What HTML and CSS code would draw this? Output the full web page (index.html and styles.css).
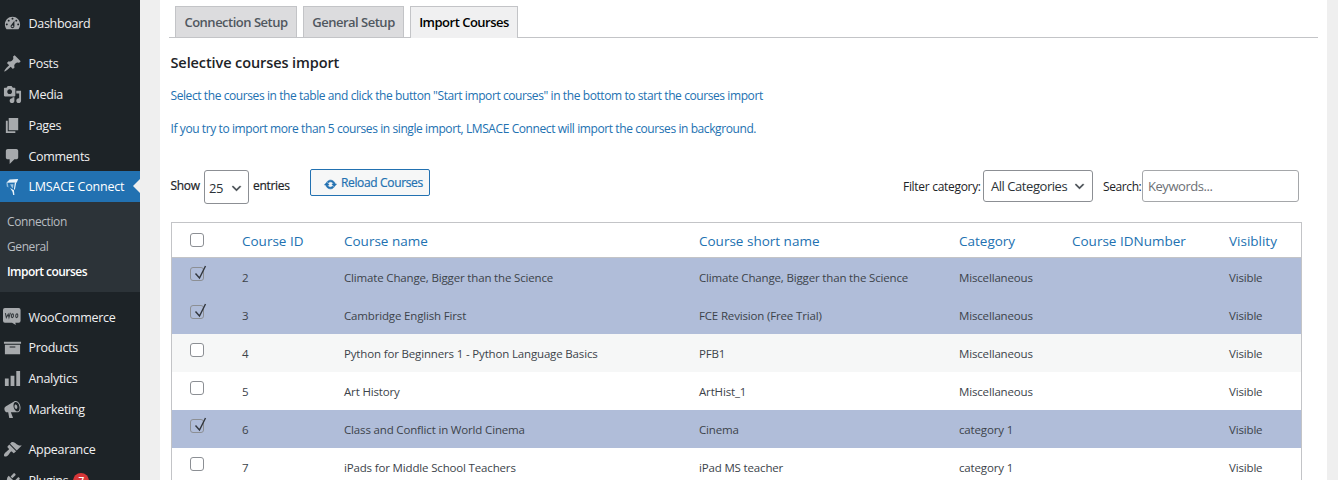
FILE: index.html
```html
<!DOCTYPE html>
<html lang="en">
<head>
<meta charset="utf-8">
<title>LMSACE Connect</title>
<link rel="stylesheet" href="styles.css">
</head>
<body>
<div class="app">
<nav class="sidebar">
  <a class="item"><svg viewBox="0 0 20 20"><path d="M3.76 16h12.48c1.1-1.37 1.76-3.11 1.76-5 0-4.42-3.58-8-8-8s-8 3.58-8 8c0 1.89.66 3.63 1.76 5zM10 4c.55 0 1 .45 1 1s-.45 1-1 1-1-.45-1-1 .45-1 1-1zM6 6c.55 0 1 .45 1 1s-.45 1-1 1-1-.45-1-1 .45-1 1-1zm8 0c.55 0 1 .45 1 1s-.45 1-1 1-1-.45-1-1 .45-1 1-1zm-5.37 5.55L12 7v6c0 1.1-.9 2-2 2s-2-.9-2-2c0-.57.24-1.08.63-1.45zM4 10c.55 0 1 .45 1 1s-.45 1-1 1-1-.45-1-1 .45-1 1-1zm12 0c.55 0 1 .45 1 1s-.45 1-1 1-1-.45-1-1 .45-1 1-1zm-5 3c0-.55-.45-1-1-1s-1 .45-1 1 .45 1 1 1 1-.45 1-1z"/></svg><span>Dashboard</span></a>
  <div class="separator"></div>
  <a class="item"><svg viewBox="0 0 20 20"><path d="M10.44 3.02l1.82-1.82 6.36 6.35-1.83 1.82c-1.05-.68-2.48-.57-3.41.36l-.75.75c-.92.93-1.04 2.35-.35 3.41l-1.83 1.82-2.41-2.41-2.8 2.79c-.42.42-3.38 2.71-3.8 2.29s1.86-3.39 2.28-3.81l2.79-2.79L4.1 9.36l1.83-1.82c1.05.69 2.48.57 3.4-.36l.75-.75c.93-.92 1.05-2.35.36-3.41z"/></svg><span>Posts</span></a>
  <a class="item"><svg viewBox="0 0 20 20"><path d="M13 11V4c0-.55-.45-1-1-1h-1.67L9 1H5L3.67 3H2c-.55 0-1 .45-1 1v7c0 .55.45 1 1 1h10c.55 0 1-.45 1-1zM7 4.5c1.38 0 2.5 1.12 2.5 2.5S8.38 9.5 7 9.5 4.5 8.38 4.5 7 5.62 4.5 7 4.5zM14 6h5v10.5c0 1.38-1.12 2.5-2.5 2.5S14 17.88 14 16.5s1.12-2.5 2.5-2.5c.17 0 .34.02.5.05V9h-3V6zm-4 8.05V13h2v3.5c0 1.38-1.12 2.5-2.5 2.5S7 17.88 7 16.5 8.12 14 9.5 14c.17 0 .34.02.5.05z"/></svg><span>Media</span></a>
  <a class="item"><svg viewBox="0 0 20 20"><path d="M6 15V2h10v13H6zm-1 1h8v2H3V5h2v11z"/></svg><span>Pages</span></a>
  <a class="item"><svg viewBox="0 0 20 20"><path d="M5 2h9c1.1 0 2 .9 2 2v7c0 1.1-.9 2-2 2h-2l-5 5v-5H5c-1.1 0-2-.9-2-2V4c0-1.1.9-2 2-2z"/></svg><span>Comments</span></a>
  <a class="item current"><svg viewBox="0 0 20 20"><path fill="#e9f3fa" d="M7 2.500L16 2l-1.500 3.800L3.500 6z"/><path fill="#8dbbdd" d="M3.500 6l1.500.5.800 4.500-1.800-1z"/><path fill="#9cc5e3" d="M7.500 7.500h3.500l-.5 4.500-1.500-1.500z"/><path fill="#e9f3fa" d="M12.500 5.500H14l-1.500 8-1-.5zM7.500 11.500l4 2.500.5 5h-1.300l-.7-3.500z"/></svg><span>LMSACE Connect</span></a>
  <div class="submenu">
    <a>Connection</a>
    <a>General</a>
    <a class="selected">Import courses</a>
  </div>
  <div class="separator"></div>
  <a class="item woo"><svg viewBox="0 0 20 20"><path d="M2 0h14.500a2 2 0 0 1 2 2v11.500a2 2 0 0 1-2 2H13l.5 2.500-4-2.500H2a2 2 0 0 1-2-2V2a2 2 0 0 1 2-2z"/><path class="mark" d="M2.500 5.500l1 4.500 2-3.500.8 3.500 1.500-5M9.400 6.500c1.800-1.600 2.200 3 .6 3.600-1.500.2-1.500-2.500-.6-3.600zM14 6.500c1.800-1.600 2.200 3 .6 3.600-1.500.2-1.500-2.500-.6-3.600z"/></svg><span>WooCommerce</span></a>
  <a class="item"><svg viewBox="0 0 20 20"><path d="M19 4v2H1V4h18zM2 7h16v10H2V7zm11 3V9H7v1h6z"/></svg><span>Products</span></a>
  <a class="item"><svg viewBox="0 0 20 20"><path d="M18 18V2h-4v16h4zm-6 0V7H8v11h4zm-6 0v-8H2v8h4z"/></svg><span>Analytics</span></a>
  <a class="item"><svg viewBox="0 0 20 20"><path d="M18.150 5.940c.46 1.620.38 3.220-.02 4.480-.42 1.280-1.260 2.180-2.300 2.480-.16.06-.26.06-.4.06-.06.02-.12.02-.18.02-.06.02-.14.02-.22.02h-6.800l2.220 5.500c.02.14-.06.26-.14.34-.08.1-.24.16-.34.16H6.950c-.1 0-.26-.06-.34-.16-.08-.08-.16-.2-.14-.34l-1-5.500H4.250l-.02-.02c-.5.06-1.080-.18-1.540-.62s-.88-1.080-1.060-1.880c-.24-.8-.2-1.560-.02-2.200.18-.62.58-1.080 1.060-1.300l.02-.02 9-5.400c.1-.06.18-.1.24-.16.06-.04.14-.08.24-.12.16-.08.28-.12.5-.18 1.040-.3 2.240.1 3.220.98s1.840 2.240 2.260 3.860zm-2.580 5.980h-.02c.4-.1.74-.34 1.040-.7.58-.7.86-1.760.86-3.040 0-.64-.1-1.300-.28-1.980-.34-1.360-1.020-2.500-1.780-3.240s-1.680-1.100-2.460-.88c-.82.22-1.400.96-1.700 2-.32 1.040-.28 2.360.06 3.720.38 1.360 1 2.500 1.800 3.240.78.74 1.620 1.100 2.480.88zm-2.540-7.080c.22-.04.42-.02.62.04.38.16.76.48 1.020 1s.42 1.200.42 1.780c0 .3-.04.56-.12.8-.18.48-.44.84-.86.94-.34.1-.8-.06-1.140-.4s-.64-.86-.78-1.500c-.18-.62-.12-1.240.02-1.720s.48-.84.82-.94z"/></svg><span>Marketing</span></a>
  <div class="separator"></div>
  <a class="item"><svg viewBox="0 0 20 20"><path d="M14.480 11.060L7.410 3.990l1.500-1.500c.5-.56 2.300-.47 3.510.32 1.210.8 1.430 1.280 2.910 2.100 1.180.64 2.450 1.260 4.450.85zm-.71.71L6.700 4.700 4.930 6.470c-.39.39-.39 1.020 0 1.410l1.060 1.060c.39.39.39 1.030 0 1.420-.6.6-1.430 1.110-2.210 1.690-.35.26-.7.53-1.010.84C1.430 14.230.4 16.080 1.400 17.070c.99 1 2.840-.03 4.180-1.360.31-.31.58-.66.85-1.020.57-.78 1.080-1.610 1.690-2.210.39-.39 1.020-.39 1.410 0l1.060 1.060c.39.39 1.020.39 1.410 0z"/></svg><span>Appearance</span></a>
  <a class="item"><svg viewBox="0 0 20 20"><path d="M13.110 4.360L9.870 7.600 8 5.730l3.240-3.240c.35-.34 1.050-.2 1.560.32.52.51.66 1.210.31 1.550zm-8 1.770l.91-1.120 9.010 9.010-1.190.84c-.71.71-2.630 1.160-3.820 1.160H6.140L4.900 17.260c-.59.59-1.540.59-2.120 0-.59-.58-.59-1.530 0-2.120l1.240-1.240v-3.880c0-1.130.4-3.190 1.090-3.890zm7.260 3.970l3.240-3.240c.34-.35 1.040-.21 1.550.31.52.51.66 1.210.31 1.550l-3.240 3.250z"/></svg><span>Plugins</span><b class="badge">7</b></a>
</nav>
<main class="panel">
  <div class="tabs">
    <a class="tab t1">Connection Setup</a>
    <a class="tab t2">General Setup</a>
    <a class="tab t3 active">Import Courses</a>
  </div>
  <h2>Selective courses import</h2>
  <p class="p1">Select the courses in the table and click the button "Start import courses" in the bottom to start the courses import</p>
  <p class="p2">If you try to import more than 5 courses in single import, LMSACE Connect will import the courses in background.</p>
  <div class="controls">
    <span class="show">Show</span>
    <div class="select count"><span>25</span><svg viewBox="0 0 20 20"><path d="M5 6l5 5 5-5 2 1-7 7-7-7 2-1z"/></svg></div>
    <span class="entries">entries</span>
    <button class="reload"><svg viewBox="0 0 20 20"><path d="M10.200 3.280c3.530 0 6.430 2.610 6.920 6h2.080l-3.500 4-3.500-4h2.320c-.45-1.970-2.210-3.450-4.320-3.450-1.450 0-2.730.71-3.540 1.780L4.950 5.660C6.230 4.200 8.110 3.280 10.200 3.280zm-.4 13.440c-3.520 0-6.430-2.610-6.920-6H.8l3.500-4c1.170 1.330 2.330 2.670 3.500 4H5.480c.45 1.970 2.210 3.450 4.320 3.450 1.450 0 2.730-.71 3.540-1.780l1.710 1.950c-1.280 1.460-3.150 2.380-5.250 2.380z"/></svg><span>Reload Courses</span></button>
    <div class="filters">
      <span class="filter">Filter category:</span>
      <div class="select category"><span>All Categories</span><svg viewBox="0 0 20 20"><path d="M5 6l5 5 5-5 2 1-7 7-7-7 2-1z"/></svg></div>
      <span class="search">Search:</span>
      <div class="field"><span>Keywords...</span></div>
    </div>
  </div>
  <table>
    <colgroup><col class="c-check"><col class="c-id"><col class="c-name"><col class="c-short"><col class="c-cat"><col class="c-num"><col></colgroup>
    <thead><tr><th><i class="box"></i></th><th>Course ID</th><th>Course name</th><th>Course short name</th><th>Category</th><th>Course IDNumber</th><th>Visiblity</th></tr></thead>
    <tbody>
      <tr class="on"><td><i class="box"><svg viewBox="0 0 18 18"><path d="M5.500 9.500l4 4.500L15.500 2"/></svg></i></td><td>2</td><td>Climate Change, Bigger than the Science</td><td>Climate Change, Bigger than the Science</td><td>Miscellaneous</td><td></td><td>Visible</td></tr>
      <tr class="on"><td><i class="box"><svg viewBox="0 0 18 18"><path d="M5.500 9.500l4 4.500L15.500 2"/></svg></i></td><td>3</td><td>Cambridge English First</td><td>FCE Revision (Free Trial)</td><td>Miscellaneous</td><td></td><td>Visible</td></tr>
      <tr class="alt"><td><i class="box"></i></td><td>4</td><td>Python for Beginners 1 - Python Language Basics</td><td>PFB1</td><td>Miscellaneous</td><td></td><td>Visible</td></tr>
      <tr><td><i class="box"></i></td><td>5</td><td>Art History</td><td>ArtHist_1</td><td>Miscellaneous</td><td></td><td>Visible</td></tr>
      <tr class="on"><td><i class="box"><svg viewBox="0 0 18 18"><path d="M5.500 9.500l4 4.500L15.500 2"/></svg></i></td><td>6</td><td>Class and Conflict in World Cinema</td><td>Cinema</td><td>category 1</td><td></td><td>Visible</td></tr>
      <tr><td><i class="box"></i></td><td>7</td><td>iPads for Middle School Teachers</td><td>iPad MS teacher</td><td>category 1</td><td></td><td>Visible</td></tr>
    </tbody>
  </table>
</main>
</div>
</body>
</html>
```
FILE: styles.css
```css
* { box-sizing: border-box; }
body { margin: 0; background: #efefef; font-family: "Open Sans", "Noto Sans", sans-serif; color: #1d2327; overflow: hidden; }
.app { display: flex; height: 480px; overflow: hidden; }
.sidebar { width: 140px; flex: none; background: #1d2327; padding-top: 8px; display: flex; flex-direction: column; }
.item { position: relative; flex: none; height: 30.8px; padding-left: 3px; display: flex; align-items: center; color: #f0f0f1; font-size: 12.5px; letter-spacing: -.3px; white-space: nowrap; }
.item svg { width: 19px; height: 19px; flex: none; margin-right: 6.500px; fill: #a7aaad; }
.item .mark { fill: none; stroke: #32383c; stroke-width: 1.100; }
.woo svg { margin-top: 1px; }
.separator { flex: none; height: 9.500px; }
.current { background: #2271b1; color: #fff; letter-spacing: -.22px; }
.current::after { content: ""; position: absolute; right: 0; top: 8px; border: 7.500px solid transparent; border-left: 0; border-right-color: #efefef; }
.submenu { flex: none; height: 90px; padding: 7px 0 0 7px; background: #2c3338; font-size: 12px; letter-spacing: -.4px; color: #b9bdc1; }
.submenu a { display: block; height: 25px; line-height: 25px; }
.submenu .selected { color: #fff; font-weight: 600; letter-spacing: -.55px; }
.badge { margin-left: 5px; width: 16px; height: 16px; border-radius: 50%; background: #d63638; color: #fff; font-size: 10px; font-weight: 600; line-height: 16px; text-align: center; letter-spacing: 0; }
.panel { width: 1167px; flex: none; margin-left: 20px; padding: 6px 9px 0; background: #fff; }
.tabs { display: flex; gap: 6px; height: 32px; padding-left: 6px; border-bottom: 1px solid #c3c4c7; }
.tab { height: 31px; border: 1px solid #c3c4c7; border-bottom: 0; background: #dcdcde; color: #50575e; font-size: 13px; font-weight: 600; line-height: 31px; text-align: center; white-space: nowrap; letter-spacing: -.5px; }
.t1 { width: 122px; }
.t2 { width: 101px; }
.t3 { width: 108px; }
.active { height: 32px; background: #f0f0f1; color: #000; }
h2 { margin: 15px 0 0 1.500px; font-size: 14.500px; line-height: 20px; font-weight: 600; letter-spacing: -.1px; }
p { margin: 0 0 0 1.500px; font-size: 12px; line-height: 20px; color: #2271b1; white-space: nowrap; letter-spacing: -.41px; }
.p1 { margin-top: 13px; }
.p2 { margin-top: 13px; }
.controls { display: flex; align-items: flex-start; height: 53px; margin: 30px 0 0 1px; font-size: 12px; line-height: 18px; white-space: nowrap; letter-spacing: -.3px; }
.select, .field { border: 1px solid #8c8f94; border-radius: 3px; display: flex; align-items: center; background: #fff; color: #2c3338; font-size: 13px; letter-spacing: -.45px; }
.select svg { width: 13px; height: 13px; flex: none; fill: #3c4349; stroke: #3c4349; stroke-width: .6; }
.show { width: 34px; padding: 8px 0 0 .5px; }
.show, .entries { -webkit-text-stroke: .2px #1d2327; }
.count { width: 45px; height: 34px; margin-top: 1px; padding: 2px 5px 0 4px; justify-content: space-between; }
.entries { width: 61px; padding: 8px 0 0 4px; }
.reload { width: 120px; height: 27px; padding: 0 0 0 13px; border: 1px solid #2271b1; border-radius: 2px; background: #f6f7f7; color: #2271b1; display: flex; align-items: center; font: 500 12px "Open Sans", sans-serif; letter-spacing: -.35px; -webkit-text-stroke: .2px #2271b1; }
.reload svg { width: 13px; height: 13px; margin: 3px 4px 0 0; fill: #2271b1; stroke: #2271b1; }
.filters { display: flex; margin-left: auto; padding: 1px 19px 0 0; }
.filter { padding-top: 8px; width: 80px; }
.category { width: 110px; height: 32px; padding: 0 6px 0 7px; justify-content: space-between; }
.search { padding: 8px 0 0 10px; width: 49px; letter-spacing: -.4px; }
.field { width: 157px; height: 32px; padding-left: 5px; color: #6c7075; border-color: #a5a7aa; }
table { width: 1131px; margin-left: 2px; table-layout: fixed; border-collapse: separate; border-spacing: 0; border: 1px solid #c3c4c7; border-bottom: 0; }
th, td { padding: 0; text-align: left; white-space: nowrap; font-size: 11.500px; font-weight: 400; color: #3c434a; letter-spacing: -.16px; vertical-align: middle; }
th { height: 35px; border-bottom: 1px solid #c3c4c7; font-size: 13.500px; letter-spacing: 0; color: #2271b1; padding-top: 2px; }
td { height: 38px; padding-top: 1px; line-height: 15px; }
th:first-child, td:first-child { padding: 0 0 0 18px; }
td:first-child { vertical-align: top; padding-top: 9px; }
.c-check { width: 70px; }
.c-id { width: 102px; }
.c-name { width: 355px; }
.c-short { width: 260px; }
.c-cat { width: 113px; }
.c-num { width: 157px; }
.on { background: #b0bdd9; }
.alt { background: #f6f7f7; }
.box { position: relative; display: block; width: 14px; height: 14px; border: 1px solid #8c8f94; border-radius: 3px; background: #fff; }
.on .box { background: transparent; }
.box svg { position: absolute; left: -1px; top: -4px; width: 18px; height: 18px; fill: none; stroke: #32373e; stroke-width: 1.400; }
```
